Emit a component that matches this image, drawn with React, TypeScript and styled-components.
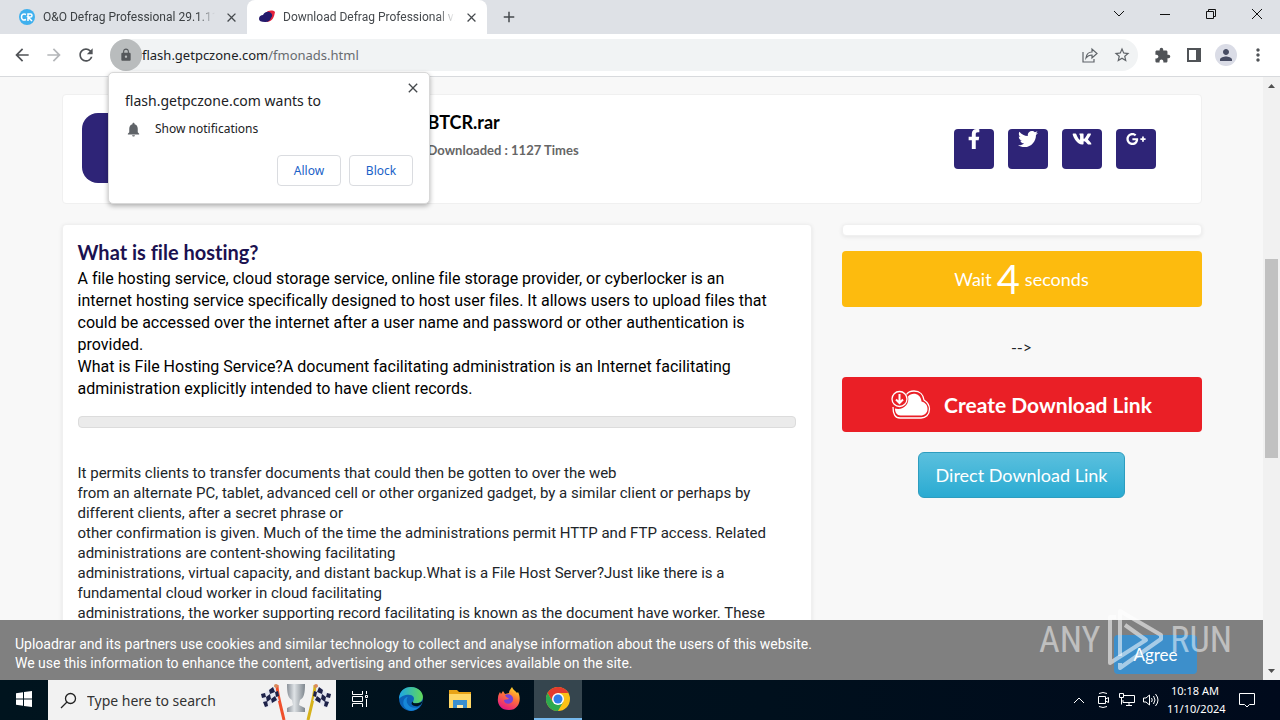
import React from 'react';
import styled, { createGlobalStyle } from 'styled-components';
import { FaFacebookF, FaTwitter, FaVk, FaGooglePlusG } from 'react-icons/fa';
import {
  MdArrowBack, MdArrowForward, MdRefresh, MdLock, MdStarOutline, MdExtension,
  MdPerson, MdMoreVert, MdNotifications, MdClose, MdAdd,
} from 'react-icons/md';

const ui = `"Noto Sans", "Open Sans", sans-serif`;
const body = `Lato, "Open Sans", sans-serif`;
const prose = `Roboto, "Noto Sans", sans-serif`;

const Global = createGlobalStyle`
  *, *::before, *::after { box-sizing: border-box; }
  html, body { margin: 0; }
  body {
    font-family: ${body};
    font-variant-ligatures: no-common-ligatures;
    color: #212529;
    background: #f8f8f8;
  }
  button, input { font: inherit; color: inherit; }
  button { padding: 0; border: 0; background: none; cursor: pointer; }
  a { text-decoration: none; color: inherit; }
  p, h1, h2, h3 { margin: 0; }
  svg { display: block; flex: none; }
`;

const Desktop = styled.div`
  display: flex;
  flex-direction: column;
  height: 100vh;
  min-height: 480px;
  overflow: hidden;
`;

/* Browser chrome */
const TabStrip = styled.div`
  display: flex;
  flex: none;
  height: 34px;
  padding-left: 7px;
  background: #dee1e6;
  font-family: Roboto, ${ui};
`;

const Tab = styled.div<{ $active?: boolean }>`
  display: flex;
  align-items: center;
  gap: 8px;
  width: 240px;
  padding: 0 8px 0 12px;
  border-radius: 8px 8px 0 0;
  background: ${(p) => (p.$active ? '#fff' : 'transparent')};
  color: ${(p) => (p.$active ? '#45494d' : '#3c4043')};
`;

const TabTitle = styled.span`
  flex: 1;
  overflow: hidden;
  white-space: nowrap;
  font-size: 12px;
  line-height: 16px;
  mask-image: linear-gradient(to right, #000 90%, transparent);
`;

const PlainButton = styled.button`
  display: flex;
  align-items: center;
  justify-content: center;
  flex: none;
  width: 16px;
  height: 16px;
  color: #45494d;
`;

const NewTab = styled(PlainButton)`
  width: 28px;
  height: 28px;
  margin: 3px 0 0 8px;
`;

const WindowControls = styled.div`
  display: flex;
  margin-left: auto;
`;

const WindowButton = styled(PlainButton)`
  width: 46px;
  height: 28px;
  color: #111;
`;

const Toolbar = styled.div`
  display: flex;
  align-items: center;
  flex: none;
  height: 43px;
  padding: 0 14px 0 12px;
  border-bottom: 1px solid #d8dadd;
  background: #fff;
`;

const NavButton = styled(PlainButton)<{ $dim?: boolean }>`
  width: 20px;
  height: 20px;
  margin-right: 12px;
  color: ${(p) => (p.$dim ? '#b4b6b9' : '#505357')};
`;

const Omnibox = styled.div`
  display: flex;
  align-items: center;
  flex: 1;
  height: 32px;
  margin-left: 2px;
  border-radius: 16px;
  background: #f1f3f4;
`;

const LockButton = styled(PlainButton)`
  width: 32px;
  height: 32px;
  border-radius: 50%;
  background: #b9bcbd;
  color: #54575a;
`;

const Address = styled.div`
  flex: 1;
  font-family: ${ui};
  font-size: 13px;
  line-height: 20px;
  color: #202124;
  span { color: #686c70; }
`;

const OmniButton = styled(PlainButton)`
  margin: 0 8px;
  color: #5f6368;
`;

const ToolButton = styled(PlainButton)`
  margin-left: 16px;
  color: #505357;
`;

const Avatar = styled(ToolButton)`
  width: 22px;
  height: 22px;
  margin: 0 -3px 0 13px;
  border-radius: 50%;
  background: #dadce6;
  color: #474c63;
`;

/* Permission prompt */
const Prompt = styled.div`
  position: absolute;
  top: 72px;
  left: 108px;
  width: 322px;
  height: 132px;
  padding: 18px 16px;
  border: 1px solid #d8d8d8;
  border-radius: 5px;
  background: #fff;
  box-shadow: 0 2px 5px rgba(0, 0, 0, 0.3);
  font-family: ${ui};
  color: #202124;
`;

const PromptClose = styled(PlainButton)`
  position: absolute;
  top: 7px;
  right: 8px;
`;

const PromptTitle = styled.h2`
  font-size: 14px;
  font-weight: 400;
  line-height: 20px;
`;

const PromptItem = styled.p`
  display: flex;
  align-items: center;
  gap: 13px;
  margin-top: 9px;
  font-size: 12px;
  line-height: 18px;
  svg { color: #5f6368; }
`;

const PromptActions = styled.div`
  display: flex;
  justify-content: flex-end;
  gap: 8px;
  margin-top: 17px;
`;

const PromptButton = styled.button`
  width: 64px;
  height: 31px;
  border: 1px solid #dadce0;
  border-radius: 4px;
  color: #1a62c8;
  font-size: 12px;
`;

/* Web page */
const Viewport = styled.div`
  position: relative;
  display: flex;
  flex: 1;
  min-height: 0;
`;

const Page = styled.main`
  flex: 1;
  min-width: 0;
  overflow: hidden;
  padding: 17px 15px 0;
  background: #f8f8f8;
`;

const Container = styled.div`
  max-width: 1140px;
  margin: 0 auto;
`;

const Panel = styled.section`
  border: 1px solid #f0f0f0;
  border-radius: 4px;
  background: #fff;
`;

const FileHeader = styled(Panel)`
  display: flex;
  justify-content: space-between;
  height: 110px;
  padding: 18px 45px 20px 19px;
`;

const FileIcon = styled.div`
  display: flex;
  align-items: flex-end;
  justify-content: center;
  width: 70px;
  height: 70px;
  border-radius: 16px;
  background: #2e2477;
`;

const FileInfo = styled.div`
  flex: 1;
  width: 0;
  margin-left: 276px;
  h1 {
    color: #000;
    font-size: 18px;
    font-weight: 700;
    line-height: 18px;
  }
  p {
    margin-top: 10px;
    color: #666;
    font-size: 13px;
    font-weight: 700;
    line-height: 18px;
  }
`;

const Social = styled.nav`
  display: flex;
  gap: 14px;
  padding-top: 16px;
`;

const SocialLink = styled.a`
  display: flex;
  justify-content: center;
  width: 40px;
  height: 40px;
  border-radius: 4px;
  background: #2e2477;
  color: #fff;
`;

const Columns = styled.div`
  display: grid;
  grid-template-columns: minmax(0, 25fr) minmax(0, 12fr);
  gap: 30px;
  margin-top: 20px;
`;

const Article = styled(Panel)`
  padding: 16px 15px;
  box-shadow: 0 1px 4px rgba(0, 0, 0, 0.08);
  white-space: nowrap;
  h2 {
    color: #1b1150;
    font-size: 20px;
    font-weight: 700;
    line-height: 22px;
  }
`;

const Lead = styled.p`
  margin-top: 5px;
  color: #000;
  font-family: ${prose};
  font-size: 16px;
  line-height: 22px;
`;

const Divider = styled.div`
  height: 12px;
  margin: 16px 0 35px;
  border: 1px solid #dcdcdc;
  border-radius: 4px;
  background: #ebebeb;
`;

const Copy = styled.p`
  font-family: ${prose};
  font-size: 15px;
  line-height: 20px;
`;

const Side = styled.aside`
  display: flex;
  flex-direction: column;
  align-items: center;
`;

const SideStub = styled(Panel)`
  width: 100%;
  height: 12px;
  box-shadow: 0 1px 4px rgba(0, 0, 0, 0.08);
`;

const Wait = styled.div`
  display: flex;
  align-items: center;
  justify-content: center;
  gap: 5px;
  width: 100%;
  height: 56px;
  margin-top: 15px;
  border-radius: 4px;
  background: #fdbb0e;
  color: #fff;
  font-size: 18px;
  strong {
    font-size: 40px;
    font-weight: 400;
    line-height: 40px;
  }
`;

const Arrow = styled.p`
  margin: 30px 0 20px;
  font-size: 16px;
  line-height: 20px;
`;

const CreateButton = styled.button`
  display: flex;
  align-items: center;
  justify-content: center;
  gap: 13px;
  width: 100%;
  height: 55px;
  border-radius: 4px;
  background: #ea1f26;
  color: #fff;
  font-size: 21px;
  font-weight: 700;
`;

const DirectLink = styled.a`
  margin-top: 20px;
  padding: 10px 17px;
  border: 1px solid #2d9dbf;
  border-radius: 6px;
  background: linear-gradient(#5bc0de, #2aabd2);
  color: #fff;
  font-size: 18px;
  line-height: 24px;
`;

const Scrollbar = styled.div`
  display: flex;
  flex-direction: column;
  align-items: center;
  justify-content: space-between;
  width: 17px;
  padding: 6px 0;
  background: #f1f1f1;
  color: #505050;
`;

const Thumb = styled.div`
  position: absolute;
  top: 182px;
  right: 2px;
  width: 13px;
  height: 199px;
  background: #c1c1c1;
`;

const CookieBar = styled.div`
  position: absolute;
  right: 17px;
  bottom: 0;
  left: 0;
  display: flex;
  align-items: center;
  justify-content: space-between;
  height: 60px;
  padding: 8px 66px 0 15px;
  background: #808080;
  color: #fff;
  font-family: ${prose};
  font-size: 14px;
  line-height: 19px;
`;

const AgreeButton = styled.button`
  width: 83px;
  height: 39px;
  border-radius: 4px;
  background: #3d8fcb;
  color: #fff;
  font-family: ${body};
  font-size: 17px;
`;

const Watermark = styled.div`
  position: absolute;
  right: 48px;
  bottom: 8px;
  display: flex;
  align-items: center;
  gap: 7px;
  color: rgba(255, 255, 255, 0.5);
  font-family: "Liberation Sans Narrow", "Roboto Condensed", Roboto, sans-serif;
  font-size: 36px;
  line-height: 60px;
  pointer-events: none;
`;

/* Taskbar */
const Taskbar = styled.footer`
  display: flex;
  flex: none;
  height: 40px;
  background: linear-gradient(to right, #00141e, #00101d 60%, #000a1c);
  color: #fff;
  font-family: ${ui};
`;

const TaskButton = styled(PlainButton)<{ $active?: boolean }>`
  width: 48px;
  height: 40px;
  color: #fff;
  background: ${(p) => (p.$active ? '#35454e' : 'transparent')};
  border-bottom: 2px solid ${(p) => (p.$active ? '#76b9ed' : 'transparent')};
`;

const Pinned = styled.div`
  display: flex;
  gap: 1px;
  padding-left: 3px;
`;

const Search = styled.label`
  display: flex;
  align-items: center;
  gap: 10px;
  width: 288px;
  padding: 0 4px 0 12px;
  background: #f2f2f2;
  color: #222;
  input {
    flex: 1;
    min-width: 0;
    padding: 0;
    border: 0;
    outline: 0;
    background: none;
    font-size: 14px;
  }
  input::placeholder { color: #333; opacity: 1; }
`;

const Tray = styled.div`
  display: flex;
  align-items: center;
  gap: 8px;
  margin-left: auto;
  padding-right: 25px;
`;

const Clock = styled.time`
  width: 56px;
  margin-right: 8px;
  font-size: 11px;
  line-height: 18px;
  text-align: center;
  white-space: nowrap;
`;

const ShareIcon = () => (
  <svg width="16" height="16" viewBox="0 0 16 16" fill="none" stroke="currentColor" strokeWidth="1.2">
    <path d="M1 5v10h11v-3M4 11c.5-4 3-6 6-6V2l5 4.500-5 4.500V8C7.500 8 5.500 9 4 11z" />
  </svg>
);

const PanelIcon = () => (
  <svg width="16" height="16" viewBox="0 0 16 16">
    <path d="M1 1h14v14H1z" fill="#505357" /><path d="M3 3h7v10H3z" fill="#fff" />
  </svg>
);

const Checker = ({ flip }: { flip?: boolean }) => (
  <g transform={flip ? 'matrix(-1 0 0 1 72 0)' : undefined}>
    <path d="M17 5c0 8 2 14 7 35" stroke={flip ? '#d6b21b' : '#f0502c'} strokeWidth="3" />
    <circle cx="16" cy="6" r="2" fill="#d98a5c" />
    <path d="M1 14c6 0 6-6 14-7l4 14c-8 0-8 6-14 7z" fill="#e4e6f0" />
    <path d="M1 14l4-1 1 4-4 1zM9 10l4-3 2 5-5 2zM6 17l4-3 1 5-4 3zM15 12l3-1 1 5-3 1zM3 22l4-1 1 5-3 1zM11 19l4-3 2 4-5 3z" fill="#1d2148" />
  </g>
);

const TrophyArt = () => (
  <svg width="72" height="40" viewBox="0 0 72 40" fill="none">
    <defs>
      <linearGradient id="cup"><stop stopColor="#8a9199" /><stop offset=".4" stopColor="#dfe3e6" /><stop offset="1" stopColor="#7e868d" /></linearGradient>
    </defs>
    <Checker /><Checker flip />
    <path d="M27 4h18c0 9-1 14-5 16l-1 5 6 3v4H27v-4l6-3-1-5c-4-2-5-7-5-16z" fill="url(#cup)" />
  </svg>
);

const Edge = () => (
  <svg width="26" height="26" viewBox="0 0 24 24">
    <defs>
      <linearGradient id="e1" x1="0" x2="1"><stop stopColor="#1ba6e8" /><stop offset="1" stopColor="#62d957" /></linearGradient>
    </defs>
    <circle cx="12" cy="12" r="11" fill="#0c63b8" />
    <path d="M1 12C1 5 6 1 12 1c7 0 11 5 11 9 0 4-3 6-6 6-3 0-4-1-3-2 2-3 0-6-4-6-4 0-8 2-9 4z" fill="url(#e1)" />
    <path d="M9 10c-3 5 1 11 8 10 2 0 3-1 4-2-3 4-8 6-12 4C3 19 4 11 9 10z" fill="#1687d9" />
    <path d="M14 14c-1 1 0 2 3 2 3 0 5-1 6-3-1 5-5 7-9 5-2-1-2-3 0-4z" fill="#00141e" />
  </svg>
);

const Explorer = () => (
  <svg width="24" height="22" viewBox="0 0 24 22">
    <path d="M1 2h8l2 2h12v4H1z" fill="#e8a317" /><path d="M1 6h22v14H1z" fill="#ffd766" />
    <path d="M5 12h14v8h-4v-3H9v3H5z" fill="#3a8fd0" /><path d="M9 17h6v3H9z" fill="#ffe9a8" />
  </svg>
);

const Firefox = () => (
  <svg width="24" height="24" viewBox="0 0 24 24">
    <defs>
      <linearGradient id="ff" x1=".8" y1="0" x2=".3" y2="1"><stop stopColor="#ffe226" /><stop offset=".45" stopColor="#ff7139" /><stop offset="1" stopColor="#e31587" /></linearGradient>
    </defs>
    <path d="M3 5l1 2 2-3 2 3 4-1c0-3 2-4 3-6 1 3 4 4 5 6l1-1c4 7 1 18-9 18C3 23 0 16 1 11c0-3 1-4 2-6z" fill="url(#ff)" />
    <path d="M8 8c3-2 9 0 8 5s-9 5-9 0l5-1c-1-2-3-1-4-4z" fill="#7543d8" />
  </svg>
);

const Chrome = () => (
  <svg width="24" height="24" viewBox="0 0 24 24">
    <circle cx="12" cy="12" r="12" fill="#fbc116" />
    <path d="M1.600 6A12 12 0 0 1 22.400 6H12L6.800 15z" fill="#e33b2e" />
    <path d="M1.600 6A12 12 0 0 0 12 24l5.200-9H6.800z" fill="#2da94f" />
    <circle cx="12" cy="12" r="6" fill="#fff" /><circle cx="12" cy="12" r="4.500" fill="#2f7de9" />
  </svg>
);

const CloudIcon = () => (
  <svg width="40" height="30" viewBox="0 0 40 30" fill="none" stroke="#fff">
    <path d="M15.500 4.500C17 2 20 1 23 1c6 0 9.500 4 10 9 3 2 5.500 4.500 5.500 9 0 6-4 9-8.500 9H9c-5 0-7-4-7-11" strokeWidth="1.300" />
    <path d="M17 6.500c4-5 13-3 13.500 5 4 1 6 4 6 7.500 0 4-3 6.500-7 6.500H9.500c-3.500 0-5.500-3-5.500-7 8 2 15-4 13-12z" fill="#fff" stroke="none" />
    <circle cx="8.500" cy="9" r="7.500" strokeWidth="1.300" />
    <path d="M8.500 4v9M5 9.500L8.500 13 12 9.500" strokeWidth="2" />
  </svg>
);

const PlayMark = () => (
  <svg width="56" height="64" viewBox="0 0 56 64" fill="none" stroke="rgba(255,255,255,.55)" strokeWidth="4" strokeLinejoin="round">
    <path d="M9 9H3v46l36-23-21-15" />
    <path d="M13 48V3l41 24v4L13 60v-5" />
  </svg>
);

export default function App() {
  return (
    <>
      <Global />
      <Desktop>
        <TabStrip>
          <Tab>
            <svg width="16" height="16" viewBox="0 0 16 16">
              <circle cx="8" cy="8" r="8" fill="#3fb0ee" />
              <path d="M7 5.500C4 4 2.500 6 2.500 8S4 12 7 10.500M9 12V5h2.500c2 0 2 3 0 3H9l4 4" fill="none" stroke="#fff" strokeWidth="1.500" />
            </svg>
            <TabTitle>O&amp;O Defrag Professional 29.1.11</TabTitle>
            <PlainButton aria-label="Close tab"><MdClose size={15} /></PlainButton>
          </Tab>
          <Tab $active>
            <svg width="16" height="16" viewBox="0 0 16 16">
              <path d="M7 4c2-3 7-3 9-1-1 5-2 9-8 10z" fill="#e5223c" />
              <path d="M0 10c0-3 2-4 4-4 2-4 6-4 8-2 2 2 1 4 0 5-1 4-5 4-6 4-4 0-6-1-6-3z" fill="#25196b" />
            </svg>
            <TabTitle>Download Defrag Professional v2</TabTitle>
            <PlainButton aria-label="Close tab"><MdClose size={15} /></PlainButton>
          </Tab>
          <NewTab aria-label="New tab"><MdAdd size={18} /></NewTab>
          <WindowControls>
            <WindowButton aria-label="Search tabs">
              <svg width="12" height="12" viewBox="0 0 12 12" fill="none" stroke="currentColor"><path d="M1 3l5 5 5-5" /></svg>
            </WindowButton>
            <WindowButton aria-label="Minimize">
              <svg width="10" height="10" viewBox="0 0 10 10" stroke="currentColor"><path d="M0 5.500h10" /></svg>
            </WindowButton>
            <WindowButton aria-label="Restore">
              <svg width="10" height="10" viewBox="0 0 10 10" fill="none" stroke="currentColor"><path d="M.5 2.500h7v7h-7zM2.500 2.500v-2h7v7h-2" /></svg>
            </WindowButton>
            <WindowButton aria-label="Close window">
              <svg width="10" height="10" viewBox="0 0 10 10" stroke="currentColor"><path d="M0 0l10 10M10 0L0 10" /></svg>
            </WindowButton>
          </WindowControls>
        </TabStrip>
        <Toolbar>
          <NavButton aria-label="Back"><MdArrowBack size={20} /></NavButton>
          <NavButton aria-label="Forward" $dim><MdArrowForward size={20} /></NavButton>
          <NavButton aria-label="Reload"><MdRefresh size={20} /></NavButton>
          <Omnibox>
            <LockButton aria-label="Site information"><MdLock size={14} /></LockButton>
            <Address>flash.getpczone.com<span>/fmonads.html</span></Address>
            <OmniButton aria-label="Share"><ShareIcon /></OmniButton>
            <OmniButton aria-label="Bookmark"><MdStarOutline size={18} /></OmniButton>
          </Omnibox>
          <ToolButton aria-label="Extensions"><MdExtension size={17} /></ToolButton>
          <ToolButton aria-label="Side panel"><PanelIcon /></ToolButton>
          <Avatar aria-label="Profile"><MdPerson size={18} /></Avatar>
          <ToolButton aria-label="Menu"><MdMoreVert size={20} /></ToolButton>
        </Toolbar>

        <Viewport>
          <Page>
            <Container>
              <FileHeader>
                <FileIcon />
                <FileInfo>
                  <h1>BTCR.rar</h1>
                  <p>Downloaded : 1127 Times</p>
                </FileInfo>
                <Social>
                  <SocialLink href="#" aria-label="Facebook"><FaFacebookF size={20} /></SocialLink>
                  <SocialLink href="#" aria-label="Twitter"><FaTwitter size={20} /></SocialLink>
                  <SocialLink href="#" aria-label="VK"><FaVk size={20} /></SocialLink>
                  <SocialLink href="#" aria-label="Google Plus"><FaGooglePlusG size={20} /></SocialLink>
                </Social>
              </FileHeader>
              <Columns>
                <Article>
                  <h2>What is file hosting?</h2>
                  <Lead>
                    A file hosting service, cloud storage service, online file storage provider, or cyberlocker is an<br />
                    internet hosting service specifically designed to host user files. It allows users to upload files that<br />
                    could be accessed over the internet after a user name and password or other authentication is<br />
                    provided.<br />
                    What is File Hosting Service?A document facilitating administration is an Internet facilitating<br />
                    administration explicitly intended to have client records.
                  </Lead>
                  <Divider />
                  <Copy>
                    It permits clients to transfer documents that could then be gotten to over the web<br />
                    from an alternate PC, tablet, advanced cell or other organized gadget, by a similar client or perhaps by<br />
                    different clients, after a secret phrase or<br />
                    other confirmation is given. Much of the time the administrations permit HTTP and FTP access. Related<br />
                    administrations are content-showing facilitating<br />
                    administrations, virtual capacity, and distant backup.What is a File Host Server?Just like there is a<br />
                    fundamental cloud worker in cloud facilitating<br />
                    administrations, the worker supporting record facilitating is known as the document have worker. These
                  </Copy>
                </Article>
                <Side>
                  <SideStub />
                  <Wait>Wait <strong>4</strong> seconds</Wait>
                  <Arrow>--&gt;</Arrow>
                  <CreateButton><CloudIcon />Create Download Link</CreateButton>
                  <DirectLink href="#">Direct Download Link</DirectLink>
                </Side>
              </Columns>
            </Container>
          </Page>
          <Scrollbar>
            <svg width="7" height="6" viewBox="0 0 7 6" fill="currentColor"><path d="M0 5l3.500-4L7 5z" /></svg>
            <Thumb />
            <svg width="7" height="6" viewBox="0 0 7 6" fill="currentColor"><path d="M0 1l3.500 4L7 1z" /></svg>
          </Scrollbar>
          <CookieBar>
            <p>
              Uploadrar and its partners use cookies and similar technology to collect and analyse information about the users of this website.<br />
              We use this information to enhance the content, advertising and other services available on the site.
            </p>
            <AgreeButton>Agree</AgreeButton>
          </CookieBar>
          <Watermark><span>ANY</span><PlayMark /><span>RUN</span></Watermark>
        </Viewport>

        <Taskbar>
          <TaskButton aria-label="Start">
            <svg width="16" height="16" viewBox="0 0 16 16" fill="currentColor"><path d="M0 2.200L7 1.200v6.300H0zM8 1l8-1v7.500H8zM0 8.500h7v6.300l-7-1zM8 8.500h8V16l-8-1z" /></svg>
          </TaskButton>
          <Search>
            <svg width="17" height="17" viewBox="0 0 17 17" fill="none" stroke="#222" strokeWidth="1.300"><circle cx="10.500" cy="6.500" r="5" /><path d="M7 10l-6 6" /></svg>
            <input type="search" placeholder="Type here to search" aria-label="Search" />
            <TrophyArt />
          </Search>
          <TaskButton aria-label="Task view">
            <svg width="18" height="18" viewBox="0 0 18 18" fill="none" stroke="currentColor"><path d="M1.500 1v3.500h10V1M1.500 6.500h10v5h-10zM1.500 17v-3.500h10V17M15.500 1v3M15.500 9v8M14.500 5.500h2v2h-2z" /></svg>
          </TaskButton>
          <Pinned>
            <TaskButton aria-label="Edge"><Edge /></TaskButton>
            <TaskButton aria-label="File Explorer"><Explorer /></TaskButton>
            <TaskButton aria-label="Firefox"><Firefox /></TaskButton>
            <TaskButton aria-label="Chrome" $active><Chrome /></TaskButton>
          </Pinned>
          <Tray>
            <svg width="16" height="16" viewBox="0 0 16 16" fill="none" stroke="currentColor"><path d="M3 11l5-5 5 5" /></svg>
            <svg width="16" height="16" viewBox="0 0 16 16" fill="none" stroke="currentColor"><path d="M3.500 4.500h7v7h-7zM10.500 7l3-1.500v5L10.500 9M4 1.500q4-2 8 0M4 14.500q4 2 8 0" /></svg>
            <svg width="16" height="16" viewBox="0 0 16 16" fill="none" stroke="currentColor"><path d="M5 3.500h10.500v7H4V8M.5 1.500h4v4h-4zM2.500 5.500v7M7 13.500h6M10 11v2" /></svg>
            <svg width="16" height="16" viewBox="0 0 16 16" fill="none" stroke="currentColor"><path d="M.5 6v4H3l3.500 3V3L3 6zM8.500 6q1.500 2 0 4M10.500 4q3 4 0 8M12.500 2q5 6 0 12" /></svg>
            <Clock>10:18 AM<br />11/10/2024</Clock>
            <svg width="16" height="16" viewBox="0 0 16 16" fill="none" stroke="currentColor"><path d="M.5 1.500h15v11h-5L8 15l-2.500-2.500h-5z" /></svg>
          </Tray>
        </Taskbar>
        <Prompt role="dialog" aria-label="Permission request">
          <PromptClose aria-label="Close"><MdClose size={16} /></PromptClose>
          <PromptTitle>flash.getpczone.com wants to</PromptTitle>
          <PromptItem><MdNotifications size={17} />Show notifications</PromptItem>
          <PromptActions>
            <PromptButton>Allow</PromptButton>
            <PromptButton>Block</PromptButton>
          </PromptActions>
        </Prompt>
      </Desktop>
    </>
  );
}
